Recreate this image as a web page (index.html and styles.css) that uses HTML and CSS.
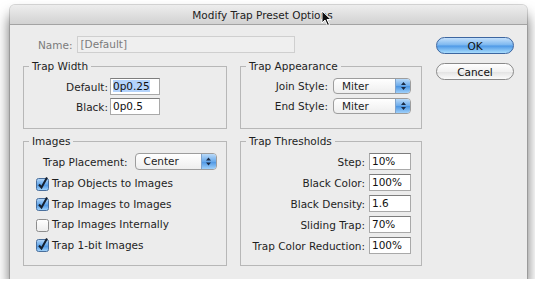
FILE: index.html
```html
<!DOCTYPE html>
<html lang="en">
<head>
    <meta charset="UTF-8">
    <title>Modify Trap Preset Options</title>
    <link rel="stylesheet" href="styles.css">
</head>
<body>
    <div class="window">
        <div class="titlebar">Modify Trap Preset Options</div>
        <div class="content">
            <div class="main">
                <div class="name-row">
                    <span class="name-label">Name:</span>
                    <span class="name-field">[Default]</span>
                </div>
                <div class="groups">
                    <fieldset class="group">
                        <legend>Trap Width</legend>
                        <div class="form-grid width-grid">
                            <label>Default:</label>
                            <span class="field"><span class="selected">0p0.25</span></span>
                            <label>Black:</label>
                            <span class="field">0p0.5</span>
                        </div>
                    </fieldset>
                    <fieldset class="group">
                        <legend>Trap Appearance</legend>
                        <div class="form-grid appearance-grid">
                            <label>Join Style:</label>
                            <span class="popup"><span class="popup-text">Miter</span><span class="popup-arrows"><svg width="13" height="14" viewBox="0 0 13 14"><path d="M6.5 3 L9 6 H4 Z M6.5 11 L9 8 H4 Z" fill="#1b2b45"/></svg></span></span>
                            <label>End Style:</label>
                            <span class="popup"><span class="popup-text">Miter</span><span class="popup-arrows"><svg width="13" height="14" viewBox="0 0 13 14"><path d="M6.5 3 L9 6 H4 Z M6.5 11 L9 8 H4 Z" fill="#1b2b45"/></svg></span></span>
                        </div>
                    </fieldset>
                    <fieldset class="group">
                        <legend>Images</legend>
                        <div class="placement-row">
                            <label>Trap Placement:</label>
                            <span class="popup placement-popup"><span class="popup-text">Center</span><span class="popup-arrows"><svg width="13" height="15" viewBox="0 0 13 15"><path d="M6.5 3.5 L9 6.5 H4 Z M6.5 11.5 L9 8.5 H4 Z" fill="#1b2b45"/></svg></span></span>
                        </div>
                        <ul class="checks">
                            <li><svg class="check" width="15" height="15" viewBox="0 0 15 15"><rect x="1.5" y="2.5" width="12" height="12" rx="2" fill="url(#blue)" stroke="#4a6f9c"/><path d="M4 8.5 L6.5 11.5 L12 1.5" fill="none" stroke="#15202e" stroke-width="2"/></svg>Trap Objects to Images</li>
                            <li><svg class="check" width="15" height="15" viewBox="0 0 15 15"><rect x="1.5" y="2.5" width="12" height="12" rx="2" fill="url(#blue)" stroke="#4a6f9c"/><path d="M4 8.5 L6.5 11.5 L12 1.5" fill="none" stroke="#15202e" stroke-width="2"/></svg>Trap Images to Images</li>
                            <li><svg class="check" width="15" height="15" viewBox="0 0 15 15"><rect x="1.5" y="2.5" width="12" height="12" rx="2" fill="url(#white)" stroke="#8d8d8d"/></svg>Trap Images Internally</li>
                            <li><svg class="check" width="15" height="15" viewBox="0 0 15 15"><rect x="1.5" y="2.5" width="12" height="12" rx="2" fill="url(#blue)" stroke="#4a6f9c"/><path d="M4 8.5 L6.5 11.5 L12 1.5" fill="none" stroke="#15202e" stroke-width="2"/></svg>Trap 1-bit Images</li>
                        </ul>
                    </fieldset>
                    <fieldset class="group">
                        <legend>Trap Thresholds</legend>
                        <div class="form-grid threshold-grid">
                            <label>Step:</label>
                            <span class="field">10%</span>
                            <label>Black Color:</label>
                            <span class="field">100%</span>
                            <label>Black Density:</label>
                            <span class="field">1.6</span>
                            <label>Sliding Trap:</label>
                            <span class="field">70%</span>
                            <label>Trap Color Reduction:</label>
                            <span class="field">100%</span>
                        </div>
                    </fieldset>
                </div>
            </div>
            <div class="buttons">
                <button class="btn btn-default">OK</button>
                <button class="btn">Cancel</button>
            </div>
        </div>
        <!-- mouse pointer over the title -->
        <svg class="cursor" width="12" height="17" viewBox="0 0 12 17">
            <path d="M1 1 V13 L4 10 L6.5 15.5 L8.5 14.5 L6 9.5 H10 Z" fill="#111" stroke="#fff" stroke-width="1"/>
        </svg>
    </div>

    <svg width="0" height="0" class="defs">
        <defs>
            <linearGradient id="blue" x1="0" y1="0" x2="0" y2="1">
                <stop offset="0" stop-color="#b7d8f8"/>
                <stop offset="0.5" stop-color="#62a6ea"/>
                <stop offset="0.52" stop-color="#4a93e2"/>
                <stop offset="1" stop-color="#a6d6fb"/>
            </linearGradient>
            <linearGradient id="white" x1="0" y1="0" x2="0" y2="1">
                <stop offset="0" stop-color="#ffffff"/>
                <stop offset="1" stop-color="#ececec"/>
            </linearGradient>
        </defs>
    </svg>
</body>
</html>
```
FILE: styles.css
```css
body {
    margin: 0;
    background: #ffffff;
    font-family: "DejaVu Sans", sans-serif;
    font-size: 10.5px;
    color: #1e1e1e;
}
.window {
    position: relative;
    margin: 5px 0 0 10px;
    width: 517px;
    height: 274px;
    background: #ececec;
    border-radius: 5px 5px 0 0;
    box-shadow: 0 0 0 1px rgba(0, 0, 0, 0.15), 0 10px 14px rgba(0, 0, 0, 0.62);
}
.titlebar {
    box-sizing: border-box;
    height: 20px;
    line-height: 20px;
    padding-right: 12px;
    text-align: center;
    color: #222;
    background: linear-gradient(#ededed, #d2d2d2);
    border-bottom: 1px solid #a3a3a3;
    border-radius: 5px 5px 0 0;
}
.content {
    display: flex;
    gap: 14px;
    padding: 11px 13px 13px;
}
.main {
    width: 399px;
}
.name-row {
    display: flex;
    align-items: center;
    gap: 4px;
    padding-left: 15px;
    margin-bottom: 6px;
    color: #7b7b7b;
}
.name-field {
    box-sizing: border-box;
    width: 218px;
    height: 17px;
    line-height: 15px;
    padding-left: 3px;
    border: 1px solid #cfcfcf;
    background: #efefef;
}
.groups {
    display: grid;
    grid-template-columns: 204px 182px;
    grid-template-rows: 70px 132px;
    column-gap: 13px;
    row-gap: 5px;
}
.group {
    margin: 0;
    padding: 0;
    min-width: 0;
    border: 1px solid #b7b7b7;
}
.group legend {
    margin-left: 5px;
    padding: 0 3px;
    line-height: 14px;
}
.form-grid {
    display: grid;
    align-items: center;
    padding-top: 5px;
}
.form-grid label {
    text-align: right;
    white-space: nowrap;
}
.width-grid {
    grid-template-columns: 84px 50px;
    column-gap: 2px;
    row-gap: 3px;
}
.appearance-grid {
    grid-template-columns: 87px 78px;
    column-gap: 5px;
    row-gap: 4px;
}
.threshold-grid {
    grid-template-columns: 124px 42px;
    column-gap: 4px;
    row-gap: 4px;
}
.field {
    box-sizing: border-box;
    height: 17px;
    line-height: 15px;
    padding-left: 2px;
    background: #ffffff;
    border: 1px solid #a9a9a9;
    border-top-color: #7d7d7d;
    color: #111;
}
.selected {
    background: #b4d3fb;
}
.popup {
    box-sizing: border-box;
    display: flex;
    height: 16px;
    border: 1px solid #9d9d9d;
    border-radius: 4px;
    background: linear-gradient(#ffffff, #eeeeee);
    overflow: hidden;
}
.popup-text {
    flex: 1;
    padding-left: 8px;
    line-height: 14px;
}
.popup-arrows {
    width: 14px;
    display: flex;
    justify-content: center;
    border-left: 1px solid #7fa3cc;
    background: linear-gradient(#b9daf9, #69a9ea 50%, #4b95e3 52%, #9fd0fa);
}
.placement-row {
    display: flex;
    align-items: center;
    gap: 7px;
    padding: 5px 0 0 19px;
}
.placement-popup {
    width: 82px;
    height: 17px;
}
.placement-popup .popup-text {
    line-height: 15px;
}
.checks {
    list-style: none;
    margin: 3px 0 0;
    padding: 0 0 0 11px;
}
.checks li {
    display: flex;
    align-items: center;
    gap: 2px;
    height: 20.5px;
}
.check {
    flex: none;
}
.buttons {
    display: flex;
    flex-direction: column;
    gap: 9px;
    padding-top: 1px;
}
.btn {
    width: 78px;
    height: 17px;
    padding: 0;
    font-family: inherit;
    font-size: 10.5px;
    color: #111;
    border: 1px solid #8a8a8a;
    border-radius: 9px;
    background: linear-gradient(#ffffff, #f1f1f1 50%, #e2e2e2 52%, #fbfbfb);
}
.btn-default {
    border-color: #3d66a0;
    background: linear-gradient(#c4e0fb, #7ab6ef 48%, #4d98e6 52%, #a8dcfd);
}
.cursor {
    position: absolute;
    left: 311px;
    top: 5px;
}
.defs {
    position: absolute;
}
```
